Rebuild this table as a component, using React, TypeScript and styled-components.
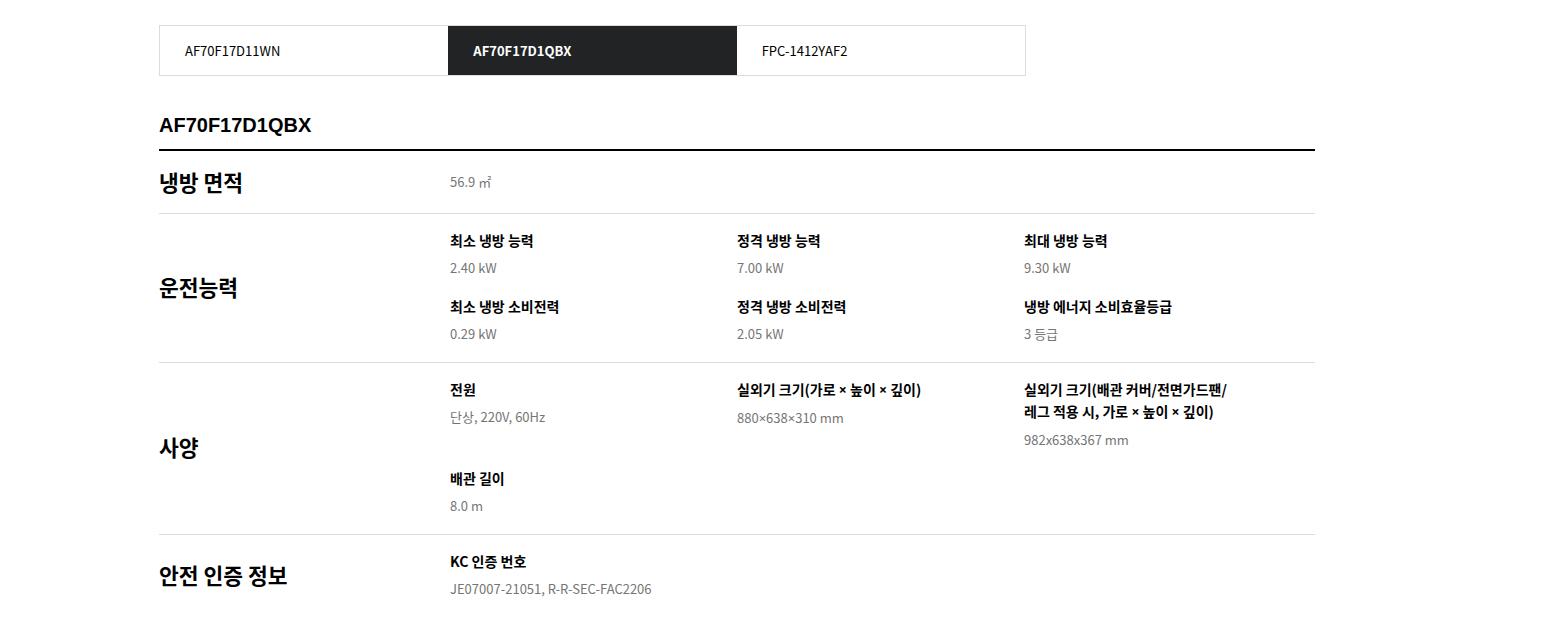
import React from "react";
import styled, { createGlobalStyle } from "styled-components";

const GlobalStyle = createGlobalStyle`
  body {
    margin: 0;
    background: #fff;
    font-family: "Noto Sans CJK KR", "Noto Sans", sans-serif;
    color: #000;
  }
`;

interface Spec {
  title?: string;
  value: string;
}

interface Section {
  label: string;
  specs: Spec[];
  compact?: boolean;
}

const models = ["AF70F17D11WN", "AF70F17D1QBX", "FPC-1412YAF2"];
const activeModel = 1;

const sections: Section[] = [
  { label: "냉방 면적", compact: true, specs: [{ value: "56.9 ㎡" }] },
  {
    label: "운전능력",
    specs: [
      { title: "최소 냉방 능력", value: "2.40 kW" },
      { title: "정격 냉방 능력", value: "7.00 kW" },
      { title: "최대 냉방 능력", value: "9.30 kW" },
      { title: "최소 냉방 소비전력", value: "0.29 kW" },
      { title: "정격 냉방 소비전력", value: "2.05 kW" },
      { title: "냉방 에너지 소비효율등급", value: "3 등급" },
    ],
  },
  {
    label: "사양",
    specs: [
      { title: "전원", value: "단상, 220V, 60Hz" },
      { title: "실외기 크기(가로 × 높이 × 깊이)", value: "880×638×310 mm" },
      {
        title: "실외기 크기(배관 커버/전면가드팬/\n레그 적용 시, 가로 × 높이 × 깊이)",
        value: "982x638x367 mm",
      },
      { title: "배관 길이", value: "8.0 m" },
    ],
  },
  {
    label: "안전 인증 정보",
    specs: [{ title: "KC 인증 번호", value: "JE07007-21051, R-R-SEC-FAC2206" }],
  },
];

// the CJK font draws × full width, so set it in a latin face
function withCross(text: string) {
  const parts = text.split("×");
  return parts.map((p, i) => (
    <React.Fragment key={i}>
      {p}
      {i < parts.length - 1 && <Cross>×</Cross>}
    </React.Fragment>
  ));
}

export default function App() {
  return (
    <Page>
      <GlobalStyle />
      <Tabs>
        {models.map((m, i) => (
          <Tab key={m} active={i === activeModel}>
            {m}
          </Tab>
        ))}
      </Tabs>
      <TitleBar>{models[activeModel]}</TitleBar>
      {sections.map((s) => (
        <Row key={s.label} compact={s.compact}>
          <Label>{s.label}</Label>
          <SpecGrid>
            {s.specs.map((spec, i) => (
              <Item key={i}>
                {spec.title && (
                  <ItemTitle>
                    {spec.title.split("\n").map((line, j) => (
                      <TitleLine key={j}>{withCross(line)}</TitleLine>
                    ))}
                  </ItemTitle>
                )}
                <ItemValue>{withCross(spec.value)}</ItemValue>
              </Item>
            ))}
          </SpecGrid>
        </Row>
      ))}
    </Page>
  );
}

let Page = styled.div`
  width: 1156px;
  padding: 25px 0 0 159px;
`;

let Tabs = styled.div`
  display: grid;
  grid-template-columns: repeat(3, 1fr);
  width: 867px;
  border: 1px solid #dcdcdc;
  box-sizing: border-box;
`;

let Tab = styled.div<{ active: boolean }>`
  height: 49px;
  display: flex;
  align-items: center;
  padding-left: 25px;
  font-size: 13px;
  background: ${({ active }) => (active ? "#212325" : "#fff")};
  color: ${({ active }) => (active ? "#fff" : "#000")};
  font-weight: ${({ active }) => (active ? 700 : 400)};
`;

let TitleBar = styled.h2`
  margin: 34px 0 0;
  padding-bottom: 9px;
  font-family: "Liberation Sans", "Noto Sans CJK KR", sans-serif;
  font-size: 20px;
  line-height: 30px;
  font-weight: 700;
  border-bottom: 2px solid #000;
`;

let Row = styled.div<{ compact?: boolean }>`
  display: grid;
  grid-template-columns: 291px 1fr;
  align-items: center;
  padding: ${({ compact }) => (compact ? "16px 0" : "15px 0 18px")};
  border-bottom: 1px solid #dcdcdc;

  &:last-child {
    border-bottom: none;
  }
`;

let Label = styled.div`
  font-size: 21.5px;
  font-weight: 700;
  line-height: 30px;
`;

let SpecGrid = styled.div`
  display: grid;
  grid-template-columns: repeat(3, 287px);
  row-gap: 17px;
`;

let Item = styled.div`
  display: flex;
  flex-direction: column;
`;

let ItemTitle = styled.div`
  font-size: 14px;
  font-weight: 700;
  line-height: 22px;
  margin-bottom: 7px;
`;

let TitleLine = styled.div`
  white-space: nowrap;
`;

let ItemValue = styled.div`
  font-size: 13px;
  line-height: 20px;
  color: #757575;
`;

let Cross = styled.span`
  font-family: "Noto Sans", sans-serif;
`;
